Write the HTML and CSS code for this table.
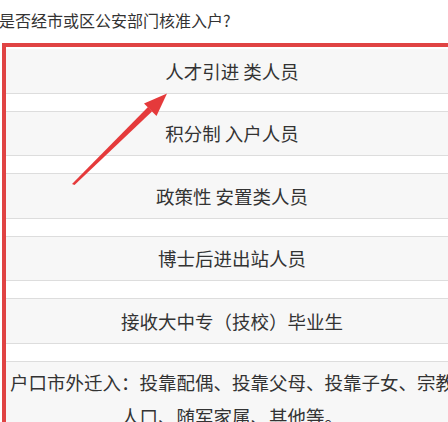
FILE: index.html
```html
<!DOCTYPE html>
<html lang="zh">
<head>
<meta charset="utf-8">
<title>核准入户</title>
<link rel="stylesheet" href="styles.css">
</head>
<body>
<div class="page">
  <h1 class="title">是否经市或区公安部门核准入户?</h1>
  <div class="box">
    <div class="item">人才引进 类人员</div>
    <div class="gap"></div>
    <div class="item">积分制 入户人员</div>
    <div class="gap"></div>
    <div class="item">政策性 安置类人员</div>
    <div class="gap"></div>
    <div class="item">博士后进出站人员</div>
    <div class="gap"></div>
    <div class="item">接收大中专（技校）毕业生</div>
    <div class="gap"></div>
    <div class="item item-multi">户口市外迁入：投靠配偶、投靠父母、投靠子女、宗教人口、随军家属、其他等。</div>
  </div>
  <svg class="arrow" width="448" height="422" viewBox="0 0 448 422" aria-hidden="true">
    <polygon points="72,184 74.5,185 152,111.5 148,107" fill="#e53a3b"/>
    <polygon points="167,93.5 156.5,116 144,103.5" fill="#e53a3b"/>
  </svg>
</div>
</body>
</html>
```
FILE: styles.css
```css
html, body {
  margin: 0;
  padding: 0;
  background: #ffffff;
  overflow: hidden;
}
body {
  width: 448px;
  height: 422px;
  font-family: "Noto Sans CJK SC", "Noto Sans", sans-serif;
  color: #333333;
}
.page {
  position: relative;
  width: 448px;
  height: 422px;
  overflow: hidden;
}
.title {
  margin: 0 0 0 -1px;
  padding-top: 8px;
  font-size: 16px;
  line-height: 24px;
  font-weight: normal;
  color: #333333;
  white-space: nowrap;
}
.box {
  margin: 11px 0 0 2px;
  width: 452px;
  border: 4px solid #e04343;
  padding-top: 2px;
  background: #ffffff;
}
.item {
  background: #f7f7f7;
  height: 43.5px;
  display: flex;
  align-items: center;
  justify-content: center;
  font-size: 18.5px;
  color: #333333;
  white-space: nowrap;
  border-bottom: 1px solid #dddddd;
}
.gap {
  height: 17px;
  background: #ffffff;
  border-bottom: 1px solid #dddddd;
}
.item-multi {
  display: block;
  text-align: center;
  white-space: normal;
  line-height: 34px;
  padding-top: 3px;
  border-bottom: none;
  height: 80px;
}
.arrow {
  position: absolute;
  left: 0;
  top: 0;
  pointer-events: none;
}
```
